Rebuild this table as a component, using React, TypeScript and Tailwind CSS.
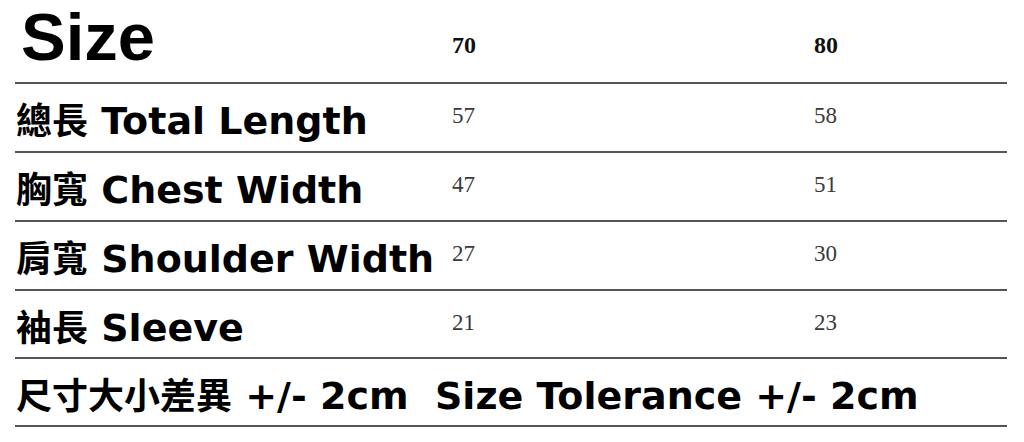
const rows = [
  { cjk: "總長", en: "Total Length", a: "57", b: "58", h: "h-[69px]" },
  { cjk: "胸寬", en: "Chest Width", a: "47", b: "51", h: "h-[69px]" },
  { cjk: "肩寬", en: "Shoulder Width", a: "27", b: "30", h: "h-[69px]" },
  { cjk: "袖長", en: "Sleeve", a: "21", b: "23", h: "h-[68px]" },
];

const labelFont = "font-['DejaVu_Sans','Noto_Sans_CJK_TC',sans-serif]";
const numFont = "font-['Liberation_Serif','Times_New_Roman',serif]";

export default function App() {
  return (
    <div className="w-[1024px] h-[442px] bg-white overflow-hidden pl-[15px] pr-[17px]">
      {/* header */}
      <div className="grid grid-cols-[437px_362px_1fr] h-[84px] border-b-2 border-[#555]">
        <div className="pl-[6px] pt-[3px] text-[67px] leading-none font-bold text-black font-['Liberation_Sans',Arial,sans-serif]">
          Size
        </div>
        <div className={`pt-[33px] text-[24px] leading-none font-bold text-[#111] ${numFont}`}>
          70
        </div>
        <div className={`pt-[33px] text-[24px] leading-none font-bold text-[#111] ${numFont}`}>
          80
        </div>
      </div>

      {rows.map((r) => (
        <div
          key={r.en}
          className={`grid grid-cols-[437px_362px_1fr] ${r.h} border-b-2 border-[#555]`}
        >
          <div
            className={`pl-[1px] pt-[18px] text-[38px] leading-none font-bold text-black whitespace-nowrap ${labelFont}`}
          >
            <span className="text-[36px]">{r.cjk}</span> {r.en}
          </div>
          <div className={`pt-[20px] text-[23px] leading-none text-[#3a3a3a] ${numFont}`}>
            {r.a}
          </div>
          <div className={`pt-[20px] text-[23px] leading-none text-[#3a3a3a] ${numFont}`}>
            {r.b}
          </div>
        </div>
      ))}

      {/* tolerance */}
      <div className="h-[68px] border-b-2 border-[#555]">
        <div
          className={`pl-[1px] pt-[18px] text-[38px] leading-none font-bold text-black whitespace-pre ${labelFont}`}
        >
          <span className="text-[36px]">尺寸大小差異</span> +/- 2cm  Size Tolerance +/- 2cm
        </div>
      </div>
    </div>
  );
}
